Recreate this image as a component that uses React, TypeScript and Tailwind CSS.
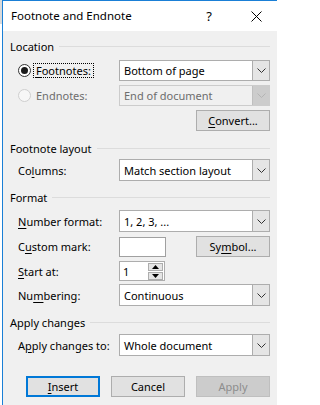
import React from 'react'

function Chevron({ disabled }: { disabled?: boolean }) {
  return (
    <svg width="9" height="5" viewBox="0 0 9 5">
      <polyline points="0.5,0.5 4.5,4.5 8.5,0.5" fill="none" stroke={disabled ? '#b4b4b4' : '#333'} strokeWidth="1" />
    </svg>
  )
}

function Select({ text, disabled }: { text: string; disabled?: boolean }) {
  return (
    <div className={`flex h-full w-[151px] border ${disabled ? 'border-[#cccccc] bg-[#f0f0f0] text-[#6d6d6d]' : 'border-[#adadad] bg-white text-black'}`}>
      <div className="flex flex-1 items-center pl-[4px]">{text}</div>
      <div className={`flex w-[17px] items-center justify-center border-l ${disabled ? 'border-[#bfbfbf] bg-[#cccccc]' : 'border-[#adadad] bg-[#e5e5e5]'}`}>
        <Chevron disabled={disabled} />
      </div>
    </div>
  )
}

function Header({ title, className }: { title: string; className: string }) {
  return (
    <div className={`flex h-[14px] items-center pl-[7px] pr-[7px] ${className}`}>
      <span>{title}</span>
      <div className="ml-[5px] h-px flex-1 bg-[#dcdcdc]" />
    </div>
  )
}

function Row({ label, children, className }: { label: React.ReactNode; children: React.ReactNode; className: string }) {
  return (
    <div className={`flex items-center pl-[15px] pr-[7px] ${className}`}>
      <div className="w-[101px]">{label}</div>
      {children}
    </div>
  )
}

function Button({ children, primary, disabled }: { children: React.ReactNode; primary?: boolean; disabled?: boolean }) {
  let cls = 'border border-[#adadad] bg-[#e1e1e1] text-black'
  if (primary) cls = 'border-2 border-[#0078d7] bg-[#e1e1e1] text-black'
  if (disabled) cls = 'border border-[#bfbfbf] bg-[#cccccc] text-[#8d8d8d]'
  return <div className={`flex h-[21px] w-[74px] items-center justify-center ${cls}`}>{children}</div>
}

export default function App() {
  return (
    <div className="flex h-[405px] w-[277px] overflow-hidden bg-white font-['Noto_Sans',sans-serif] text-[11px] leading-none text-black">
      <div className="flex w-[2px] flex-col">
        <div className="h-[24px] bg-[#dadada]" />
        <div className="flex-1 bg-white" />
      </div>
      <div className="flex flex-1 flex-col border-l border-t border-[#1a7fd6]">
        <div className="flex h-[30px] items-center bg-white pl-[8px]">
          <span className="text-[11.5px]">Footnote and Endnote</span>
          <span className="ml-auto text-[13px]">?</span>
          <svg className="ml-[39px] mr-[15px]" width="11" height="11" viewBox="0 0 11 11">
            <path d="M0.5 0.5 L10.5 10.5 M10.5 0.5 L0.5 10.5" stroke="#000" strokeWidth="1" fill="none" />
          </svg>
        </div>
        <div className="flex flex-1 flex-col bg-[#f0f0f0] pt-[8px]">
          <Header title="Location" className="" />

          <div className="mt-[7px] flex h-[21px] items-center pl-[15px] pr-[7px]">
            <div className="flex w-[101px] items-center">
              <div className="flex h-[13px] w-[13px] items-center justify-center rounded-full border border-[#333] bg-white">
                <div className="h-[7px] w-[7px] rounded-full bg-[#1a1a1a]" />
              </div>
              <span className="ml-[2px] border border-dotted border-black px-[2px] py-[1px]">
                <span className="underline underline-offset-2">F</span>ootnotes:
              </span>
            </div>
            <Select text="Bottom of page" />
          </div>

          <div className="mt-[4px] flex h-[21px] items-center pl-[15px] pr-[7px]">
            <div className="flex w-[101px] items-center text-[#6d6d6d]">
              <div className="h-[13px] w-[13px] rounded-full border border-[#cfcfcf] bg-[#f7f7f7]" />
              <span className="ml-[5px]">Endnotes:</span>
            </div>
            <Select text="End of document" disabled />
          </div>

          <div className="mt-[4px] flex justify-end pr-[7px]">
            <Button>
              <span><span className="underline underline-offset-2">C</span>onvert...</span>
            </Button>
          </div>

          <Header title="Footnote layout" className="mt-[10px]" />
          <Row className="mt-[4px] h-[22px]" label={<span>Co<span className="underline underline-offset-2">l</span>umns:</span>}>
            <Select text="Match section layout" />
          </Row>

          <Header title="Format" className="mt-[9px]" />
          <Row className="mt-[6px] h-[22px]" label={<span><span className="underline underline-offset-2">N</span>umber format:</span>}>
            <Select text="1, 2, 3, ..." />
          </Row>
          <Row className="mt-[4px] h-[21px]" label={<span>C<span className="underline underline-offset-2">u</span>stom mark:</span>}>
            <div className="h-[20px] w-[47px] border border-[#a0a0a0] bg-white" />
            <div className="ml-auto">
              <Button>
                <span>Sy<span className="underline underline-offset-2">m</span>bol...</span>
              </Button>
            </div>
          </Row>
          <Row className="mt-[4px] h-[20px]" label={<span><span className="underline underline-offset-2">S</span>tart at:</span>}>
            <div className="flex h-[20px] w-[46px] items-center border border-[#adadad] bg-white pl-[3px]">
              <span>1</span>
              <div className="ml-auto mr-[1px] flex h-[17px] w-[15px] flex-col gap-px">
                <div className="flex flex-1 items-center justify-center border border-[#adadad] bg-[#e5e5e5]">
                  <svg width="7" height="4" viewBox="0 0 7 4"><polygon points="3.5,0 7,4 0,4" fill="#000" /></svg>
                </div>
                <div className="flex flex-1 items-center justify-center border border-[#adadad] bg-[#e5e5e5]">
                  <svg width="7" height="4" viewBox="0 0 7 4"><polygon points="0,0 7,0 3.5,4" fill="#000" /></svg>
                </div>
              </div>
            </div>
          </Row>
          <Row className="mt-[3px] h-[22px]" label={<span>Nu<span className="underline underline-offset-2">m</span>bering:</span>}>
            <Select text="Continuous" />
          </Row>

          <Header title="Apply changes" className="mt-[9px]" />
          <Row className="mt-[5px] h-[22px]" label={<span>A<span className="underline underline-offset-2">p</span>ply changes to:</span>}>
            <Select text="Whole document" />
          </Row>

          <div className="mt-[20px] flex justify-end gap-[11px] pr-[7px]">
            <Button primary>
              <span><span className="underline underline-offset-2">I</span>nsert</span>
            </Button>
            <Button>Cancel</Button>
            <Button disabled>Apply</Button>
          </div>
        </div>
      </div>
    </div>
  )
}
